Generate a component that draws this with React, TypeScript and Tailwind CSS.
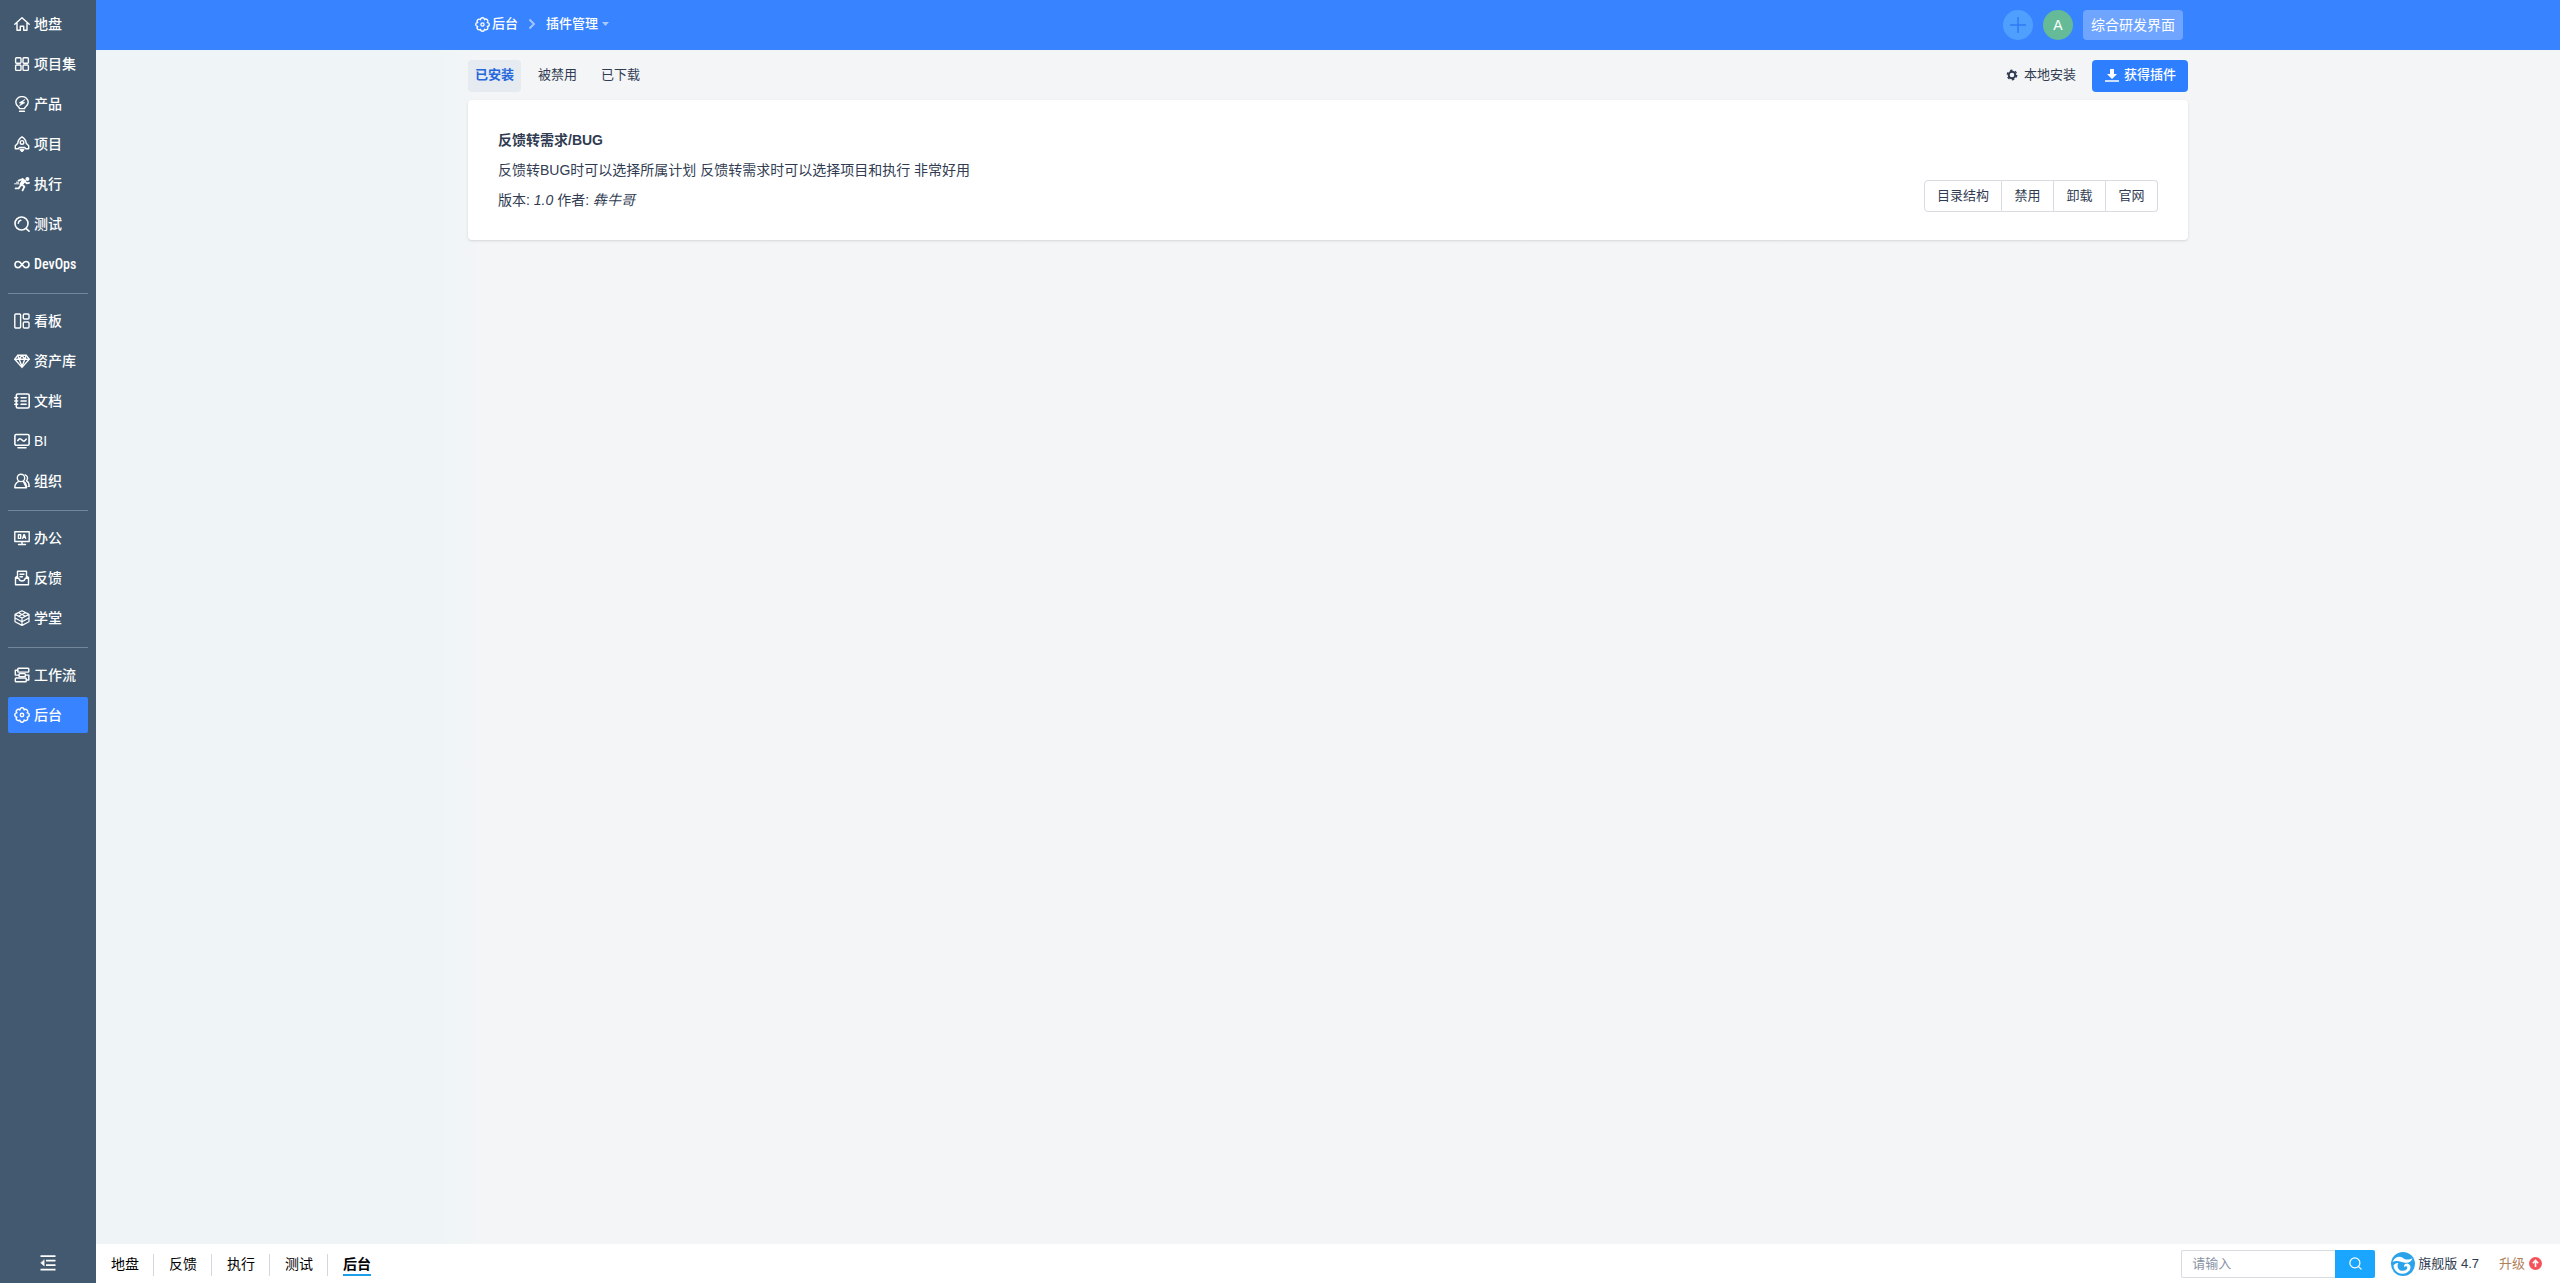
import React, { useState } from "react";
import { LuSearch } from "react-icons/lu";

interface MenuItem {
  key: string;
  label: string;
  icon: React.ReactNode;
}

const Icon = ({ children, size = 16 }: { children: React.ReactNode; size?: number }) => (
  <svg
    width={size}
    height={size}
    viewBox="0 0 16 16"
    fill="none"
    stroke="currentColor"
    strokeWidth="1.4"
    strokeLinejoin="round"
    strokeLinecap="round"
    className="shrink-0"
    aria-hidden="true"
  >
    {children}
  </svg>
);

const GearIcon = ({ size = 16 }: { size?: number }) => (
  <Icon size={size}>
    <path d="M13.1 10.1A2.1 2.1 0 0110.1 13.1 2.1 2.1 0 015.9 13.1 2.1 2.1 0 012.9 10.1 2.1 2.1 0 012.9 5.9 2.1 2.1 0 015.9 2.9 2.1 2.1 0 0110.1 2.9 2.1 2.1 0 0113.1 5.9 2.1 2.1 0 0113.1 10.1z" />
    <circle cx="8" cy="8" r="1.7" />
  </Icon>
);

const groups: MenuItem[][] = [
  [
    {
      key: "my",
      label: "地盘",
      icon: (
        <Icon>
          <path d="M.8 8.2L8 1.7l7.2 6.5M3 7v7.3h3.3v-4h3.4v4H13V7" />
        </Icon>
      ),
    },
    {
      key: "program",
      label: "项目集",
      icon: (
        <Icon>
          <rect x="1.6" y="1.8" width="5.4" height="5.4" rx="1" />
          <rect x="9" y="1.8" width="5.4" height="5.4" rx="1" />
          <rect x="1.6" y="9" width="5.4" height="5.4" rx="1" />
          <rect x="9" y="9" width="5.4" height="5.4" rx="1" />
        </Icon>
      ),
    },
    {
      key: "product",
      label: "产品",
      icon: (
        <Icon>
          <path d="M5.5 12.6C5.3 10.8 1.8 9.8 1.8 6.3a6.2 5.7 0 0112.4 0c0 3.5-3.5 4.5-3.7 6.3z" />
          <path d="M5.8 15.3h4.4" strokeWidth="1.8" />
          <path d="M10.8 3.6L5.2 6.8l2 .6-1.8 2.4 5.4-3-2-.8z" fill="currentColor" strokeWidth=".6" />
        </Icon>
      ),
    },
    {
      key: "project",
      label: "项目",
      icon: (
        <Icon>
          <path d="M8 .8C5.4 2.4 3.8 4.6 3.8 7.2L1.3 9.8v2.9h3l1-1.2h5.4l1 1.2h3V9.8l-2.5-2.6C12.2 4.6 10.6 2.4 8 .8z" />
          <circle cx="8" cy="6.4" r="1.8" />
          <path d="M6.2 13.5h3.6L8 15.6z" fill="currentColor" />
        </Icon>
      ),
    },
    {
      key: "execution",
      label: "执行",
      icon: (
        <Icon>
          <circle cx="13.4" cy="3" r="2" fill="currentColor" stroke="none" />
          <path d="M8.8 3.2l2.6 1.6-3.6 4.6-1.6-1.2z" fill="currentColor" />
          <path d="M4.6 4.6l4-1.6M7.5 8.6l2.9 2-1.8 3.8M11.4 5.8l1.4 1.6 2.2-.6M6.6 9.6l-2 2.8h-3" strokeWidth="1.8" />
          <path d="M.6 7.8h4.2M2.4 6.2h2.2" strokeWidth="1" />
        </Icon>
      ),
    },
    {
      key: "qa",
      label: "测试",
      icon: (
        <Icon>
          <circle cx="7.5" cy="7.5" r="6.5" strokeWidth="1.6" />
          <path d="M12.2 12.6l2.8 2.6M4.3 7.2a3.3 3.3 0 012.4-2.9" strokeWidth="1.6" />
        </Icon>
      ),
    },
    {
      key: "devops",
      label: "DevOps",
      icon: (
        <Icon>
          <path
            d="M8 8.5C6.7 6.6 5.6 5.5 4.1 5.5a3.1 3.1 0 000 6.2C5.6 11.7 6.7 10.4 8 8.5s2.4-3 3.9-3a3.1 3.1 0 010 6.2C10.4 11.7 9.3 10.4 8 8.5z"
            strokeWidth="1.6"
          />
        </Icon>
      ),
    },
  ],
  [
    {
      key: "kanban",
      label: "看板",
      icon: (
        <Icon>
          <rect x=".8" y="1" width="5.8" height="14" rx="1" />
          <rect x="9.3" y="1" width="5.7" height="5" rx="1" />
          <rect x="9.3" y="9" width="5.7" height="6" rx="1" />
        </Icon>
      ),
    },
    {
      key: "assetlib",
      label: "资产库",
      icon: (
        <Icon>
          <path d="M3.8 2.2h8.4l3 4L8 14.4.8 6.2z" />
          <path d="M1 6.2h14M5.2 6.2L8 13.6l2.8-7.4M5.2 6.2L8 2.4l2.8 3.8M3.8 2.4l1.4 3.8M12.2 2.4l-1.4 3.8" />
        </Icon>
      ),
    },
    {
      key: "doc",
      label: "文档",
      icon: (
        <Icon>
          <rect x="2.3" y="1" width="12.9" height="14" rx="1.5" strokeWidth="1.6" />
          <path d="M7 4.7h5.2M7 8h5.2M7 11.3h5.2M.7 4.7h3M.7 8h3M.7 11.3h3" />
        </Icon>
      ),
    },
    {
      key: "bi",
      label: "BI",
      icon: (
        <Icon>
          <rect x=".9" y="1.5" width="14.2" height="10.8" rx="1.3" strokeWidth="1.6" />
          <path d="M3.8 7.6c1.4-2.6 2.8-2.2 4.2-.6s2.8 1.6 4.2-.8M4 14.8h8" strokeWidth="1.6" />
        </Icon>
      ),
    },
    {
      key: "org",
      label: "组织",
      icon: (
        <Icon>
          <circle cx="7" cy="4.9" r="3.7" />
          <path d="M.8 14.7c0-3.3 1.6-5.3 3.9-6.3M9.3 8.4c2.2 1 3.2 3 3.2 6.3zM.8 14.7h11.7M11.2 1.8a3.6 3.6 0 011.3 5.9c1.8 1.1 2.7 3 2.7 5.7h-1" />
        </Icon>
      ),
    },
  ],
  [
    {
      key: "oa",
      label: "办公",
      icon: (
        <Icon>
          <path d="M.8 1.8h14.4v9.7H.8zM8 11.5v2.7M4.5 14.5h7" />
          <path d="M4.4 4.8h2.3v3.6H4.4zM8.7 8.4l1.1-3.6h.6l1.2 3.6M9.3 7.2h2" />
        </Icon>
      ),
    },
    {
      key: "feedback",
      label: "反馈",
      icon: (
        <Icon>
          <path d="M3.5 8V1.3h9V8M6 4.2h4M6 6.8h2.5M3.5 6l-2 1.5v7.2h13V7.5l-2-1.5M1.5 8.3h3.3c.4 2 1.5 2.7 3.2 2.7s2.8-.7 3.2-2.7h3.3" />
        </Icon>
      ),
    },
    {
      key: "traincourse",
      label: "学堂",
      icon: (
        <Icon>
          <path
            d="M8 .8l7 3.6v7.4l-7 3.6-7-3.6V4.4zM1 4.4L8 8l7-3.6M8 8v7.4M1 8l7 3.7L15 8M4.5 2.7l7 3.5M11.5 2.7l-7 3.5"
            strokeWidth="1.2"
          />
        </Icon>
      ),
    },
  ],
  [
    {
      key: "workflow",
      label: "工作流",
      icon: (
        <Icon>
          <rect x="3.8" y="1.3" width="11" height="3.8" rx=".8" />
          <rect x="5" y="6.6" width="6.4" height="3" rx=".8" />
          <rect x="1.3" y="11" width="11" height="3.8" rx=".8" />
          <path d="M3.8 3.3H1.3v4.8H5M11.4 8.1h3.4V13h-2.5" />
        </Icon>
      ),
    },
    { key: "admin", label: "后台", icon: <GearIcon /> },
  ],
];

const tabs = ["已安装", "被禁用", "已下载"];
const actions = ["禁用", "卸载", "官网"];
const openedApps = ["地盘", "反馈", "执行", "测试", "后台"];

const Sidebar: React.FC = () => (
  <aside className="flex w-24 shrink-0 flex-col bg-[#42596f] px-2 pt-1.5 pb-3 text-sm font-medium text-white">
    <nav>
      {groups.map((group, index) => (
        <ul
          key={index}
          className={
            index === 0
              ? "space-y-1"
              : "mt-[11px] space-y-1 border-t border-[#73869a] pt-[9px]"
          }
        >
          {group.map((item) => (
            <li key={item.key}>
              <a
                href={`#${item.key}`}
                className={
                  item.key === "admin"
                    ? "flex h-9 items-center gap-1 rounded-xs bg-[#3883ff] pl-1.5"
                    : "flex h-9 items-center gap-1 pl-1.5"
                }
              >
                {item.icon}
                <span
                  className={
                    item.key === "devops"
                      ? "font-['Roboto_Condensed','Roboto',sans-serif]"
                      : ""
                  }
                >
                  {item.label}
                </span>
              </a>
            </li>
          ))}
        </ul>
      ))}
    </nav>
    <button type="button" aria-label="折叠菜单" className="mt-auto self-center">
      <Icon>
        <path d="M.5 1.2h15M6 5.7h9.5M6 10.2h9.500M.5 14.7h15" strokeWidth="1.8" strokeLinecap="butt" />
        <path d="M4.2 5v6L.8 8z" fill="currentColor" strokeWidth=".5" />
      </Icon>
    </button>
  </aside>
);

const Header: React.FC = () => (
  <header className="h-[50px] bg-[#3883ff] px-[372px] text-white">
    <div className="flex h-full items-center justify-between px-[5px]">
      <nav className="flex items-center pb-0.5 pl-0.5 font-medium">
        <a href="#admin" className="flex items-center gap-0.5">
          <GearIcon size={15} />
          后台
        </a>
        <svg width="8" height="12" viewBox="0 0 8 12" fill="none" className="mx-2.5" aria-hidden="true">
          <path d="M1.5 1.5L6 6l-4.5 4.5" stroke="#a5c8ff" strokeWidth="1.8" />
        </svg>
        <button type="button" className="flex items-center gap-1">
          插件管理
          <svg width="7" height="4" viewBox="0 0 7 4" aria-hidden="true">
            <path d="M0 0h7L3.5 4z" fill="#a5c8ff" />
          </svg>
        </button>
      </nav>
      <div className="flex items-center gap-2.5">
        <button
          type="button"
          aria-label="添加"
          className="flex size-[30px] items-center justify-center rounded-full bg-[#4f9fff] text-[#2f7af5]"
        >
          <Icon>
            <path d="M8 0v16M0 8h16" strokeWidth="1.5" />
          </Icon>
        </button>
        <button
          type="button"
          className="size-[30px] rounded-full bg-[#65ba98] text-sm"
        >
          A
        </button>
        <button
          type="button"
          className="h-[30px] rounded bg-[#6fa5ff] px-2 text-sm"
        >
          综合研发界面
        </button>
      </div>
    </div>
  </header>
);

const Footer: React.FC = () => (
  <footer className="flex h-[39px] items-center justify-between bg-white pr-[18px]">
    <nav className="mt-0.5 flex text-sm text-black">
      {openedApps.map((app) => (
        <a
          key={app}
          href={`#${app}`}
          className={
            app === "后台"
              ? "ml-[15px] border-b-2 border-[#1b9fe8] font-bold leading-5"
              : "border-r border-[#d4d8de] pr-3.5 pl-[15px] leading-5"
          }
        >
          {app}
        </a>
      ))}
    </nav>
    <div className="flex items-center">
      <form className="mr-4 flex h-7">
        <input
          type="text"
          aria-label="搜索"
          placeholder="请输入"
          className="w-[154px] rounded-l-xs border border-r-0 border-[#d8dbe0] px-2.5 outline-none placeholder:text-[#8a93a5]"
        />
        <button
          type="submit"
          aria-label="搜索"
          className="flex w-10 items-center justify-center rounded-r-xs bg-[#1aa5ff] text-white"
        >
          <LuSearch size={15} />
        </button>
      </form>
      <a href="#version" className="flex items-center gap-[3px]">
        <svg width="24" height="24" viewBox="0 0 24 24" fill="none" aria-hidden="true">
          <circle cx="12" cy="12" r="12" fill="#2aa3ea" />
          <path
            d="M1.5 10C3.5 5 8.500 3.500 12 6c2.500 1.800 5.500 2.300 9.500.3-1 3.400-3.800 5-7.500 4.400C9.500 10 7 7.500 1.500 10z"
            fill="#fff"
          />
          <path
            d="M2.500 13.500c1-1.800 2.800-2.700 4.800-2.500-1.600 2.700-.6 7.800 4.500 7.800 3.200 0 4.700-1.800 4.500-3.300-.2-1.300-2.300-1.700-2.800-.2-1.300-2.200.8-4.200 3.200-3.600 2.500.6 3.500 3.200 2.300 5.700-1.300 2.700-4.200 4.300-7.500 4.300-5 0-8.700-3.500-9-8.200z"
            fill="#fff"
          />
        </svg>
        旗舰版 4.7
      </a>
      <a href="#upgrade" className="ml-5 flex items-center gap-1 text-[#b0825c]">
        升级
        <svg width="13" height="13" viewBox="0 0 13 13" fill="none" aria-hidden="true">
          <circle cx="6.5" cy="6.5" r="6.5" fill="#f5535b" />
          <path d="M6.5 10V4M3.8 6.2l2.7-2.7 2.7 2.7" stroke="#fff" strokeWidth="1.6" />
        </svg>
      </a>
    </div>
  </footer>
);

const App: React.FC = () => {
  const [tab, setTab] = useState("已安装");

  return (
    <div className="flex min-h-screen bg-[#f4f5f7] font-['Liberation_Sans','Noto_Sans_CJK_SC',sans-serif] text-[13px] leading-5 text-[#313c52]">
      <Sidebar />
      <div className="flex min-w-0 flex-1 flex-col">
        <Header />

        <main className="flex-1 bg-linear-to-r from-[#eff5f6] from-14% to-[#f4f5f7] to-16% px-[372px]">
          {/* Toolbar */}
          <div className="flex h-[50px] items-center justify-between pt-0.5">
            <div className="flex gap-2.5">
              {tabs.map((name) => (
                <button
                  key={name}
                  type="button"
                  onClick={() => setTab(name)}
                  className={
                    tab === name
                      ? "h-8 rounded bg-[#e6eaf1] px-[7px] pb-0.5 font-bold text-[#2468dc]"
                      : "h-8 px-[7px] pb-0.5"
                  }
                >
                  {name}
                </button>
              ))}
            </div>
            <div className="flex gap-1">
              <button type="button" className="flex h-8 items-center gap-1 px-3 pb-0.5">
                <Icon>
                  <circle cx="8" cy="8" r="3.3" strokeWidth="2" />
                  <circle cx="8" cy="8" r="4.7" strokeWidth="1.4" strokeDasharray="2.4 2.52" strokeLinecap="butt" />
                </Icon>
                本地安装
              </button>
              <button
                type="button"
                className="flex h-8 items-center gap-1 rounded bg-[#2e7fff] px-3 pb-0.5 font-medium text-white"
              >
                <svg width="16" height="16" viewBox="0 0 16 16" fill="currentColor" aria-hidden="true">
                  <path d="M6 2h4v5h3l-5 5-5-5h3zM1 13.2h14v1.6H1z" />
                </svg>
                获得插件
              </button>
            </div>
          </div>

          {/* Plugin list */}
          <section className="flex min-h-[140px] items-end justify-between rounded bg-white px-[30px] py-7 shadow-sm">
            <div className="self-start text-sm leading-6">
              <h2 className="font-bold">反馈转需求/BUG</h2>
              <p className="mt-1.5">
                反馈转BUG时可以选择所属计划 反馈转需求时可以选择项目和执行 非常好用
              </p>
              <p className="mt-1.5">
                版本: <i>1.0</i> 作者: <i>犇牛哥</i>
              </p>
            </div>
            <div className="flex h-8">
              <button type="button" className="w-[78px] rounded-l border border-[#d8dbe2]">
                目录结构
              </button>
              {actions.map((action) => (
                <button
                  key={action}
                  type="button"
                  className="w-[52px] border border-l-0 border-[#d8dbe2] last:rounded-r"
                >
                  {action}
                </button>
              ))}
            </div>
          </section>
        </main>

        <Footer />
      </div>
    </div>
  );
};

export default App;
